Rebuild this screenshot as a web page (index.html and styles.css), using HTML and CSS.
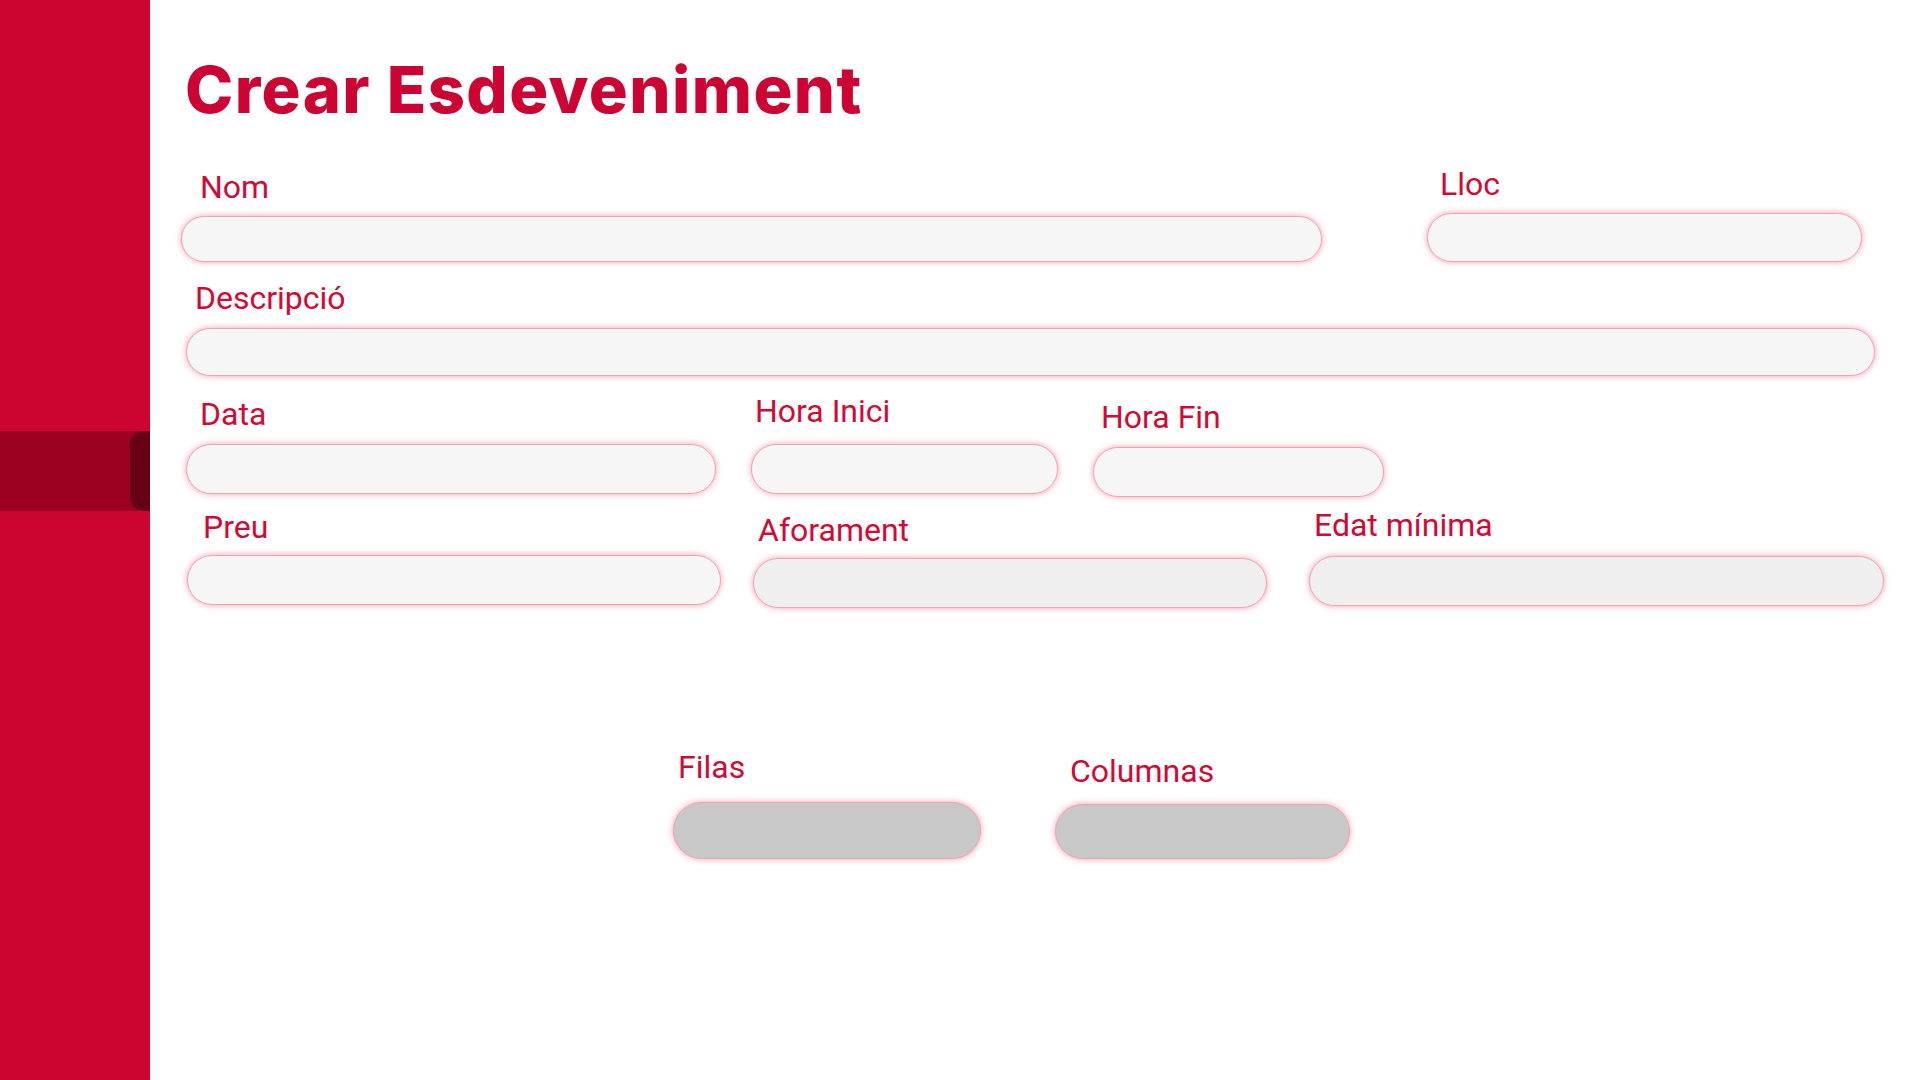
FILE: index.html
```html
<!DOCTYPE html>
<html lang="ca">
<head>
<meta charset="utf-8">
<title>Crear Esdeveniment</title>
<link rel="stylesheet" href="styles.css">
</head>
<body>
<div class="app">
  <aside class="sidebar">
    <div class="nav-item"><span class="nav-tab"></span></div>
  </aside>
  <main class="main">
    <h1 class="title">Crear Esdeveniment</h1>
    <form class="form">
      <div class="row row-1">
        <div class="field f-nom"><label class="label">Nom</label><input class="input" type="text"></div>
        <div class="field f-lloc"><label class="label">Lloc</label><input class="input" type="text"></div>
      </div>
      <div class="row row-2">
        <div class="field f-desc"><label class="label">Descripció</label><input class="input" type="text"></div>
      </div>
      <div class="row row-3">
        <div class="field f-data"><label class="label">Data</label><input class="input" type="text"></div>
        <div class="field f-hini"><label class="label">Hora Inici</label><input class="input" type="text"></div>
        <div class="field f-hfin"><label class="label">Hora Fin</label><input class="input" type="text"></div>
      </div>
      <div class="row row-4">
        <div class="field f-preu"><label class="label">Preu</label><input class="input" type="text"></div>
        <div class="field f-afor"><label class="label">Aforament</label><input class="input input-alt" type="text"></div>
        <div class="field f-edat"><label class="label">Edat mínima</label><input class="input input-alt" type="text"></div>
      </div>
      <div class="row row-5">
        <div class="field f-filas"><label class="label">Filas</label><input class="input input-seat" type="text"></div>
        <div class="field f-cols"><label class="label">Columnas</label><input class="input input-seat" type="text"></div>
      </div>
    </form>
  </main>
</div>
</body>
</html>
```
FILE: styles.css
```css
* { box-sizing: border-box; }
html, body { margin: 0; padding: 0; background: #ffffff; }
body { font-family: Roboto, "Liberation Sans", sans-serif; }

.app { display: flex; min-height: 1080px; }

.sidebar {
  width: 150px;
  flex: none;
  background: #cc0430;
  padding-top: 431px;
}
.nav-item {
  height: 80px;
  background: #9b0021;
  display: flex;
  justify-content: flex-end;
}
.nav-tab {
  width: 20px;
  background: #650016;
  border-radius: 14px 0 0 14px;
}

.main { flex: 1; padding-left: 30px; }

.title {
  margin: 58px 0 0 5px;
  font-family: Inter, "Open Sans", sans-serif;
  font-weight: 800;
  font-size: 65px;
  line-height: 64px;
  letter-spacing: 1.4px;
  color: #cc0433;
}

.form { display: flex; flex-direction: column; }
.row { display: flex; align-items: flex-start; }

.label {
  display: block;
  font-size: 32px;
  line-height: 38px;
  color: #cf0a36;
}

.input {
  display: block;
  width: 100%;
  height: 46px;
  margin-top: 10px;
  border: 1px solid #f2a3b3;
  border-radius: 999px;
  background: #f6f6f6;
  box-shadow: 0 0 6px rgba(225, 40, 80, 0.45);
  outline: none;
  font: inherit;
}
.input-alt { background: #efefef; }
.input-seat { background: #c8c8c8; }

/* row 1 */
.row-1 { margin-top: 46px; }
.f-nom { margin-left: 1px; width: 1141px; }
.f-nom .label { margin-left: 19px; }
.f-nom .input { height: 46px; }
.f-lloc { margin-left: 105px; width: 435px; margin-top: -3px; }
.f-lloc .label { margin-left: 13px; }
.f-lloc .input { height: 49px; }

/* row 2 */
.row-2 { margin-top: 17px; }
.f-desc { margin-left: 6px; width: 1689px; }
.f-desc .label { margin-left: 9px; }
.f-desc .input { margin-top: 11px; height: 48px; }

/* row 3 */
.row-3 { margin-top: 16px; }
.f-data { margin-left: 6px; width: 530px; margin-top: 3px; }
.f-data .label { margin-left: 14px; }
.f-data .input { margin-top: 11px; height: 50px; }
.f-hini { margin-left: 35px; width: 307px; }
.f-hini .label { margin-left: 4px; }
.f-hini .input { margin-top: 14px; height: 50px; }
.f-hfin { margin-left: 35px; width: 291px; margin-top: 6px; }
.f-hfin .label { margin-left: 8px; }
.f-hfin .input { margin-top: 11px; height: 50px; }

/* row 4 */
.row-4 { margin-top: 9px; }
.f-preu { margin-left: 7px; width: 534px; margin-top: 2px; }
.f-preu .label { margin-left: 16px; }
.f-preu .input { margin-top: 9px; height: 50px; }
.f-afor { margin-left: 32px; width: 514px; margin-top: 5px; }
.f-afor .label { margin-left: 5px; }
.f-afor .input { margin-top: 9px; height: 50px; }
.f-edat { margin-left: 42px; width: 575px; }
.f-edat .label { margin-left: 5px; }
.f-edat .input { margin-top: 12px; height: 50px; }

/* row 5 */
.row-5 { margin-top: 140px; }
.f-filas { margin-left: 493px; width: 308px; }
.f-filas .label { margin-left: 5px; }
.f-filas .input { margin-top: 16px; height: 57px; }
.f-cols { margin-left: 74px; width: 295px; margin-top: 4px; }
.f-cols .label { margin-left: 15px; }
.f-cols .input { margin-top: 14px; height: 55px; }
```
